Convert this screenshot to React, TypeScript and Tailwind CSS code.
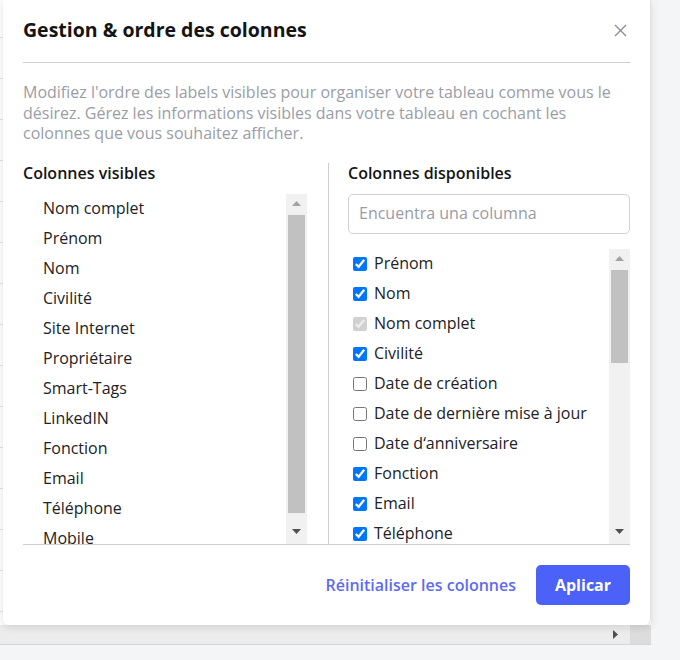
import React from "react";

const visibles = [
  "Nom complet",
  "Prénom",
  "Nom",
  "Civilité",
  "Site Internet",
  "Propriétaire",
  "Smart-Tags",
  "LinkedIN",
  "Fonction",
  "Email",
  "Téléphone",
  "Mobile",
];

const disponibles: { label: string; checked: boolean; disabled?: boolean }[] = [
  { label: "Prénom", checked: true },
  { label: "Nom", checked: true },
  { label: "Nom complet", checked: true, disabled: true },
  { label: "Civilité", checked: true },
  { label: "Date de création", checked: false },
  { label: "Date de dernière mise à jour", checked: false },
  { label: "Date d‘anniversaire", checked: false },
  { label: "Fonction", checked: true },
  { label: "Email", checked: true },
  { label: "Téléphone", checked: true },
];

const ScrollBar = ({ thumbTop, thumbHeight }: { thumbTop: number; thumbHeight: number }) => {
  return (
    <div className="w-[21px] shrink-0 bg-[#f1f1f1] flex flex-col items-center">
      <div className="h-[19px] w-full flex items-center justify-center">
        <svg width="9" height="5" viewBox="0 0 9 5">
          <polygon points="0,5 9,5 4.5,0" fill="#a3a3a3" />
        </svg>
      </div>
      <div className="flex-1 w-full flex flex-col items-center">
        <div style={{ height: thumbTop }} />
        <div className="w-[17px] bg-[#c1c1c1]" style={{ height: thumbHeight }} />
      </div>
      <div className="h-[24px] w-full flex items-center justify-center">
        <svg width="9" height="5" viewBox="0 0 9 5">
          <polygon points="0,0 9,0 4.5,5" fill="#505050" />
        </svg>
      </div>
    </div>
  );
};

export default function App() {
  return (
    <div
      className="relative w-[680px] h-[660px] bg-[#f4f5f7] overflow-hidden"
      style={{ fontFamily: "'Open Sans', Lato, sans-serif" }}
    >
      {/* page behind */}
      <div className="w-[651px] flex flex-col">
        <div className="h-[625px] bg-white flex flex-col overflow-hidden">
          <div className="h-[38px] shrink-0 border-b border-[#e3e3e6]" />
          {Array.from({ length: 14 }).map((_, i) => (
            <div key={i} className="h-[41px] shrink-0 border-b border-[#e3e3e6]" />
          ))}
        </div>
        <div className="h-[20px] bg-[#ececec] flex items-center justify-end border-b border-[#d6d6d8]">
          <svg width="5" height="9" viewBox="0 0 5 9" className="mr-[12px]">
            <polygon points="0,0 5,4.5 0,9" fill="#505050" />
          </svg>
          <div className="w-[21px] h-full bg-[#dcdcdc]" />
        </div>
      </div>

      {/* modal */}
      <div className="absolute left-[3px] top-0 w-[648px] h-[625px] bg-white rounded-b-[6px] shadow-[0_2px_8px_rgba(0,0,0,0.12)] border-r border-[#e2e2e6] px-[20px] pt-[18px] flex flex-col">
        <div className="flex items-center justify-between h-[24px]">
          <h2 className="text-[19.5px] font-bold text-[#141414] leading-[24px]">
            Gestion &amp; ordre des colonnes
          </h2>
          <svg width="13" height="13" viewBox="0 0 13 13" className="mr-[3px]">
            <path d="M1 1L12 12M12 1L1 12" stroke="#8b8e98" strokeWidth="1.4" />
          </svg>
        </div>
        <div className="h-px bg-[#cfcfd3] mt-[20px]" />
        <p className="mt-[19px] text-[16px] leading-[20.5px] text-[#9b9da6]">
          Modifiez l'ordre des labels visibles pour organiser votre tableau comme vous le
          désirez. Gérez les informations visibles dans votre tableau en cochant les
          colonnes que vous souhaitez afficher.
        </p>

        <div className="mt-[19px] flex border-b border-[#cfcfd3] h-[382px]">
          {/* left */}
          <div className="w-[305px] pr-[21px] flex flex-col">
            <h3 className="text-[16px] font-semibold text-[#141414] leading-[20px]">
              Colonnes visibles
            </h3>
            <div className="mt-[11px] flex-1 flex overflow-hidden">
              <div className="flex-1 pl-[20px] overflow-hidden">
                {visibles.map((v) => (
                  <div
                    key={v}
                    className="h-[30px] flex items-center pb-[2px] text-[16px] text-[#222226]"
                  >
                    {v}
                  </div>
                ))}
              </div>
              <ScrollBar thumbTop={2} thumbHeight={298} />
            </div>
          </div>

          {/* right */}
          <div className="flex-1 border-l border-[#cfcfd3] pl-[19px] flex flex-col">
            <h3 className="text-[16px] font-semibold text-[#141414] leading-[20px]">
              Colonnes disponibles
            </h3>
            <input
              placeholder="Encuentra una columna"
              className="mt-[11px] h-[40px] w-full border border-[#d2d2d6] rounded-[5px] px-[10px] pb-[2px] text-[16px] text-[#222226] placeholder:text-[#9a9ba4] outline-none"
            />
            <div className="mt-[15px] flex-1 flex overflow-hidden">
              <div className="flex-1 overflow-hidden">
                {disponibles.map((d) => (
                  <label
                    key={d.label}
                    className="h-[30px] flex items-center text-[16px] text-[#222226] whitespace-nowrap"
                  >
                    <input
                      type="checkbox"
                      defaultChecked={d.checked}
                      disabled={d.disabled}
                      className="w-[14px] h-[14px] m-0 ml-[5px] mr-[7px] shrink-0"
                    />
                    <span className="pb-[2px]">{d.label}</span>
                  </label>
                ))}
              </div>
              <ScrollBar thumbTop={2} thumbHeight={93} />
            </div>
          </div>
        </div>

        <div className="flex-1 flex items-center justify-end gap-[20px]">
          <button className="text-[16px] font-semibold text-[#5d6af3] leading-[20px]">
            Réinitialiser les colonnes
          </button>
          <button className="h-[40px] w-[94px] rounded-[5px] bg-[#4b61f7] text-white text-[16px] font-bold leading-[20px]">
            Aplicar
          </button>
        </div>
      </div>
    </div>
  );
}
